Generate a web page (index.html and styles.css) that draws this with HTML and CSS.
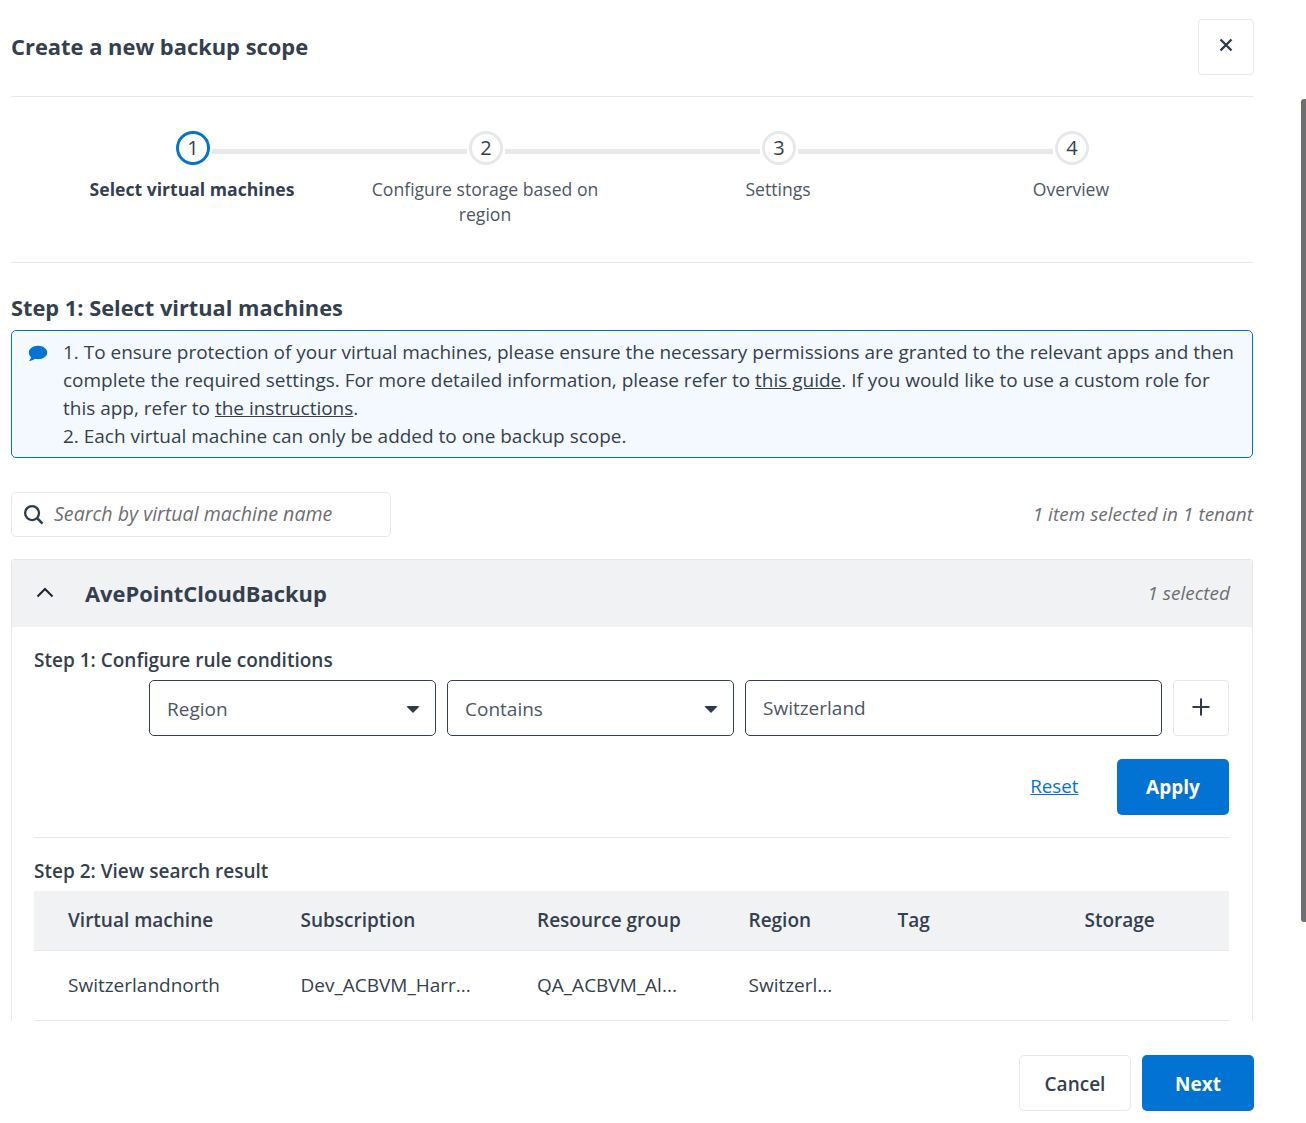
FILE: index.html
```html
<!DOCTYPE html>
<html lang="en">
<head>
<meta charset="utf-8">
<title>Create a new backup scope</title>
<link rel="stylesheet" href="styles.css">
</head>
<body>
<div class="scrollbar"></div>
<main class="dialog">
  <header class="head">
    <h1>Create a new backup scope</h1>
    <button class="btn-square close" aria-label="Close">
      <svg width="14" height="14" viewBox="0 0 14 14"><path d="M1.500 1.500 12.500 12.500M12.500 1.500 1.500 12.500" stroke="#2f3b4d" stroke-width="2.400" fill="none"/></svg>
    </button>
  </header>
  <section class="stepper">
    <div class="step active">
      <div class="track"><i class="line hidden"></i><span class="circle">1</span><i class="line"></i></div>
      <div class="label">Select virtual machines</div>
    </div>
    <div class="step">
      <div class="track"><i class="line"></i><span class="circle">2</span><i class="line"></i></div>
      <div class="label">Configure storage based on region</div>
    </div>
    <div class="step">
      <div class="track"><i class="line"></i><span class="circle">3</span><i class="line"></i></div>
      <div class="label">Settings</div>
    </div>
    <div class="step">
      <div class="track"><i class="line"></i><span class="circle">4</span><i class="line hidden"></i></div>
      <div class="label">Overview</div>
    </div>
  </section>
  <h2>Step 1: Select virtual machines</h2>
  <div class="info">
    <svg class="info-icon" width="20" height="17" viewBox="0 0 20 17"><path d="M10 .8c5 0 9.200 2.900 9.200 6.700S15 14.200 10 14.200c-1.200 0-2.300-.2-3.300-.5C5.300 15 3.300 15.900.9 16c1.100-1 1.900-2.300 2.100-3.900C1.700 10.900.8 9.300.8 7.500.8 3.700 5 .8 10 .8z" fill="#0273d3"/></svg>
    <p>1. To ensure protection of your virtual machines, please ensure the necessary permissions are granted to the relevant apps and then complete the required settings. For more detailed information, please refer to <u>this guide</u>. If you would like to use a custom role for this app, refer to <u>the instructions</u>.<br>2. Each virtual machine can only be added to one backup scope.</p>
  </div>
  <div class="search-row">
    <div class="search">
      <svg width="21" height="21" viewBox="0 0 22 22"><circle cx="9.500" cy="9.500" r="7.300" stroke="#2f3b4d" stroke-width="2.400" fill="none"/><path d="M14.800 14.800 20.500 20.500" stroke="#2f3b4d" stroke-width="2.600" fill="none"/></svg>
      <span>Search by virtual machine name</span>
    </div>
    <div class="count">1 item selected in 1 tenant</div>
  </div>
  <section class="panel">
    <div class="panel-head">
      <svg class="chevron" width="18" height="11" viewBox="0 0 18 11"><path d="M1.500 9.500 9 2l7.500 7.500" stroke="#1c2430" stroke-width="2" fill="none"/></svg>
      <span class="tenant">AvePointCloudBackup</span>
      <span class="selected">1 selected</span>
    </div>
    <div class="panel-body">
      <div class="sub">Step 1: Configure rule conditions</div>
      <div class="rule">
        <div class="field select"><span>Region</span><i class="caret"></i></div>
        <div class="field select"><span>Contains</span><i class="caret"></i></div>
        <div class="field grow"><span>Switzerland</span></div>
        <button class="btn-square plus" aria-label="Add">
          <svg width="18" height="18" viewBox="0 0 18 18"><path d="M9 .5v17M.5 9h17" stroke="#2f3b4d" stroke-width="2" fill="none"/></svg>
        </button>
      </div>
      <div class="actions">
        <a class="reset">Reset</a>
        <button class="btn primary">Apply</button>
      </div>
      <div class="sub second">Step 2: View search result</div>
      <div class="table">
        <div class="tr th"><span>Virtual machine</span><span>Subscription</span><span>Resource group</span><span>Region</span><span>Tag</span><span>Storage</span></div>
        <div class="tr td"><span>Switzerlandnorth</span><span>Dev_ACBVM_Harr...</span><span>QA_ACBVM_Al...</span><span>Switzerl...</span><span></span><span></span></div>
      </div>
    </div>
  </section>
  <footer class="foot">
    <button class="btn ghost">Cancel</button>
    <button class="btn primary">Next</button>
  </footer>
</main>
</body>
</html>
```
FILE: styles.css
```css
* { box-sizing: border-box; }
html, body { margin: 0; height: 1123px; overflow: hidden; background: #fff; }
body { font-family: "Open Sans", "Liberation Sans", sans-serif; color: #343f4f; font-size: 18px; position: relative; }
.scrollbar { position: absolute; left: 1301px; top: 99px; width: 5px; height: 823px; background: #6e6e73; border-radius: 3px 0 0 3px; }
.dialog { width: 1243px; margin-left: 11px; padding-top: 19px; }
.head { display: flex; justify-content: space-between; align-items: center; height: 78px; padding-bottom: 22px; border-bottom: 1px solid #e7e8ea; }
h1 { margin: 0; font-size: 21.900px; line-height: 56px; font-weight: 700; color: #343f4f; }
h2 { margin: 33px 0 10px; height: 24px; font-size: 21.800px; line-height: 24px; font-weight: 700; color: #343f4f; }
.btn-square { width: 56px; height: 56px; display: flex; align-items: center; justify-content: center; padding: 0; background: #fff; border: 1px solid #e7e8ea; border-radius: 4px; }
.close { padding-bottom: 4px; }
.plus { padding-bottom: 2px; }
.stepper { display: flex; height: 166px; padding: 34px 35.500px 0 34.500px; margin-right: 1px; border-bottom: 1px solid #e7e8ea; }
.step { flex: 1; min-width: 0; text-align: center; }
.track { display: flex; align-items: flex-start; gap: 2px; height: 36px; }
.line { flex: 1; height: 5px; margin-top: 18px; background: #e7e8ea; }
.line.hidden { visibility: hidden; }
.line:first-child { flex: none; width: 129.500px; margin-left: -1px; }
.circle { width: 34px; height: 34px; flex: none; border: 3px solid #e7e8ea; border-radius: 50%; display: flex; align-items: center; justify-content: center; font-size: 20px; line-height: 1; background: #fff; }
.active .circle { border-color: #0273d3; }
.label { width: 240px; margin: 10px auto 0; font-size: 17.600px; line-height: 25px; color: #4c5766; }
.active .label { font-weight: 700; color: #343f4f; }
.info { display: flex; height: 128px; margin-right: 1px; padding: 7px 14px 0 16px; background: #f3f9fe; border: 1px solid #0273d3; border-radius: 5px; }
.info-icon { flex: none; margin: 7px 15px 0 0; width: 20px; height: 17px; }
.info p { margin: 0; font-size: 18.980px; line-height: 28px; color: #343f4f; }
.search-row { display: flex; justify-content: space-between; align-items: center; margin: 34px 1px 22px 0; height: 45px; }
.search { width: 380px; height: 45px; display: flex; align-items: center; gap: 10px; padding-left: 11px; border: 1px solid #e7e8ea; border-radius: 5px; font-style: italic; font-size: 19.600px; color: #6e6e73; }
.search span { padding-bottom: 2px; }
.count { font-style: italic; font-size: 19px; color: #6e6e73; padding-bottom: 2px; }
.panel { height: 462px; margin-right: 1px; border: 1px solid #e7e8ea; border-bottom: 0; border-radius: 4px 4px 0 0; overflow: hidden; }
.panel-head { display: flex; align-items: center; height: 67px; padding: 0 22px 0 24px; background: #f1f2f4; }
.chevron { margin-bottom: 2px; }
.tenant { margin-left: 31px; font-size: 21.900px; font-weight: 700; color: #343f4f; }
.selected { margin-left: auto; font-style: italic; font-size: 19px; color: #6e6e73; padding-bottom: 2px; }
.panel-body { padding: 20px 23px 0 22px; }
.sub { height: 26px; font-size: 19px; line-height: 26px; font-weight: 600; color: #343f4f; }
.rule { display: flex; gap: 11px; margin-top: 7px; padding-left: 115px; }
.field { width: 287px; height: 56px; display: flex; align-items: center; justify-content: space-between; padding: 2px 15px 0 17px; border: 1px solid #343f4f; border-radius: 5px; font-size: 19px; color: #4c5766; }
.field.grow { flex: 1; width: auto; padding-top: 0; }
.caret { width: 0; height: 0; border-left: 7px solid transparent; border-right: 7px solid transparent; border-top: 7px solid #2f3b4d; border-radius: 2px; }
.actions { display: flex; justify-content: flex-end; align-items: center; gap: 38.500px; margin-top: 23px; padding-bottom: 22px; border-bottom: 1px solid #e7e8ea; }
.reset { color: #0273d3; font-size: 18.800px; text-decoration: underline; padding-bottom: 2px; }
.btn { width: 112px; height: 56px; padding: 0; border-radius: 5px; font-family: inherit; font-size: 19px; }
.foot .btn { padding-top: 2px; }
.primary { background: #0273d3; border: 0; color: #fff; font-weight: 700; }
.ghost { background: #fff; border: 1px solid #e7e8ea; color: #343f4f; font-weight: 600; }
.sub.second { margin-top: 20px; }
.table { margin-top: 7px; }
.tr { display: grid; grid-template-columns: 232.500px 236.500px 211.500px 149px 187px 1fr; align-items: center; padding: 0 0 2px 34px; font-size: 19px; border-bottom: 1px solid #e7e8ea; }
.th { height: 60px; background: #f1f2f4; font-weight: 600; }
.td { height: 70px; color: #343f4f; }
.foot { display: flex; justify-content: flex-end; gap: 11px; margin-top: 34px; }
```
